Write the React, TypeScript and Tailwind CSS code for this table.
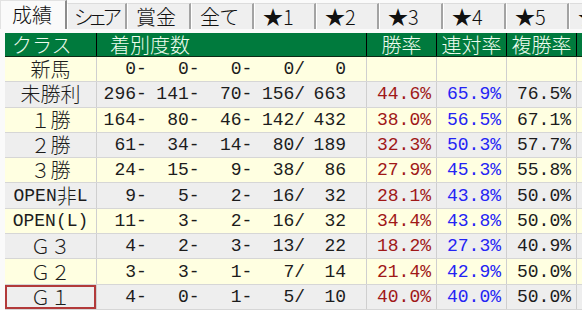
import React from "react";

const JP = "font-['Noto_Sans_CJK_JP',sans-serif] font-light";
const MONO = "font-['Liberation_Mono','Noto_Sans_CJK_JP',monospace] text-[18px]";

const tabs = [
  { label: "成績", w: "w-[67px]" },
  { label: "シェア", w: "w-[60px]" },
  { label: "賞金", w: "w-[64px]" },
  { label: "全て", w: "w-[63px]" },
  { label: "★1", w: "w-[62px]" },
  { label: "★2", w: "w-[63px]" },
  { label: "★3", w: "w-[64px]" },
  { label: "★4", w: "w-[63px]" },
  { label: "★5", w: "w-[63px]" },
  { label: "★6", w: "w-[63px]" },
];

type Row = { label: string; n: number[]; p: [string, string, string] | null };

const rows: Row[] = [
  { label: "新馬", n: [0, 0, 0, 0, 0], p: null },
  { label: "未勝利", n: [296, 141, 70, 156, 663], p: ["44.6", "65.9", "76.5"] },
  { label: "１勝", n: [164, 80, 46, 142, 432], p: ["38.0", "56.5", "67.1"] },
  { label: "２勝", n: [61, 34, 14, 80, 189], p: ["32.3", "50.3", "57.7"] },
  { label: "３勝", n: [24, 15, 9, 38, 86], p: ["27.9", "45.3", "55.8"] },
  { label: "OPEN非L", n: [9, 5, 2, 16, 32], p: ["28.1", "43.8", "50.0"] },
  { label: "OPEN(L)", n: [11, 3, 2, 16, 32], p: ["34.4", "43.8", "50.0"] },
  { label: "Ｇ３", n: [4, 2, 3, 13, 22], p: ["18.2", "27.3", "40.9"] },
  { label: "Ｇ２", n: [3, 3, 1, 7, 14], p: ["21.4", "42.9", "50.0"] },
  { label: "Ｇ１", n: [4, 0, 1, 5, 10], p: ["40.0", "40.0", "50.0"] },
];

// right edges of the sub-fields inside 着別度数
const fieldW = ["w-[50px]", "w-[53px]", "w-[53px]", "w-[53px]", "w-[41px]"];
const suffix = ["-", "-", "-", "/", ""];

function Label({ text }: { text: string }) {
  // half-width parts in the mono face, the rest in the CJK face
  const parts = text.split(/([\x00-\x7f]+)/).filter(Boolean);
  return (
    <span className="whitespace-nowrap leading-none flex items-center">
      {parts.map((s, i) =>
        /^[\x00-\x7f]+$/.test(s) ? (
          <span key={i} className={`${MONO} leading-none`}>
            {s}
          </span>
        ) : (
          <span key={i} className={`${JP} text-[20px] leading-none`}>
            {s}
          </span>
        ),
      )}
    </span>
  );
}

function Tabs() {
  const txt = `${JP} text-[20px] leading-none text-[#111] whitespace-nowrap [font-feature-settings:'palt']`;
  return (
    <div className="flex h-[29px] items-end">
      {tabs.map((t, i) =>
        i === 0 ? (
          <div
            key={t.label}
            className={`${t.w} h-[29px] shrink-0 flex items-center pl-[11px] bg-[#fafafa] border-t border-l border-[#e2e2e2] border-r-2 border-r-[#8c8c8c] ${txt}`}
          >
            {t.label}
          </div>
        ) : (
          <div
            key={t.label}
            className={`${t.w} h-[26px] shrink-0 flex items-center pl-[6px] bg-[#efefef] border-t border-t-[#dcdcdc] border-l border-l-white border-r-2 border-r-[#a3a3a3] ${txt}`}
          >
            {t.label === "シェア" ? (
              <span className="tracking-[-3px]">{t.label}</span>
            ) : (
              <span className="pl-[2px]">{t.label}</span>
            )}
          </div>
        ),
      )}
    </div>
  );
}

function Header() {
  const cell = `h-full flex items-center border-r border-black ${JP} text-[20px] leading-none text-[#eefcee] whitespace-nowrap`;
  return (
    <div className="flex h-[24px] bg-[#007a3d] border-b border-[#0d2a14]">
      <div className={`${cell} w-[92px] shrink-0 pl-[7px]`}>クラス</div>
      <div className={`${cell} w-[270px] shrink-0 pl-[13px]`}>着別度数</div>
      <div className={`${cell} w-[70px] shrink-0 justify-center`}>勝率</div>
      <div className={`${cell} w-[70px] shrink-0 justify-center`}>連対率</div>
      <div className={`${cell} w-[70px] shrink-0 justify-center`}>複勝率</div>
      <div className={`${cell} w-[70px] shrink-0 justify-center`}>単回率</div>
    </div>
  );
}

function DataRow({ row, index }: { row: Row; index: number }) {
  const bg = index % 2 === 0 ? "bg-[#ffffe1]" : "bg-[#eeeeee]";
  const last = row.label === "Ｇ１";
  const cell = "h-full flex items-center shrink-0 border-r border-[#cfcfcf]";
  return (
    <div className={`flex h-[25.3px] ${bg} border-b border-[#d6d6d6] text-[#1c1c1c]`}>
      <div className={`${cell} w-[92px] justify-center relative`}>
        <Label text={row.label} />
        {last && <span className="absolute inset-0 border-2 border-[#b23a3a]" />}
      </div>
      <div className={`${cell} w-[270px] pr-[20px]`}>
        {row.n.map((v, i) => (
          <span key={i} className={`${fieldW[i]} text-right ${MONO} leading-none whitespace-pre`}>
            {v}
            {suffix[i]}
          </span>
        ))}
      </div>
      <div className={`${cell} w-[70px] justify-end pr-[5px] ${MONO} leading-none text-[#a01818]`}>
        {row.p ? `${row.p[0]}%` : ""}
      </div>
      <div className={`${cell} w-[70px] justify-end pr-[5px] ${MONO} leading-none text-[#2424f4]`}>
        {row.p ? `${row.p[1]}%` : ""}
      </div>
      <div className={`${cell} w-[70px] justify-end pr-[5px] ${MONO} leading-none text-[#1c1c1c]`}>
        {row.p ? `${row.p[2]}%` : ""}
      </div>
      <div className={`${cell} w-[70px]`} />
    </div>
  );
}

export default function App() {
  return (
    <div className="w-[582px] h-[310px] overflow-hidden bg-[#fafafa]">
      <Tabs />
      <div className="pt-[4px] pl-[5px]">
        <div className="w-[642px]">
          <Header />
          {rows.map((r, i) => (
            <DataRow key={r.label} row={r} index={i} />
          ))}
        </div>
      </div>
    </div>
  );
}
